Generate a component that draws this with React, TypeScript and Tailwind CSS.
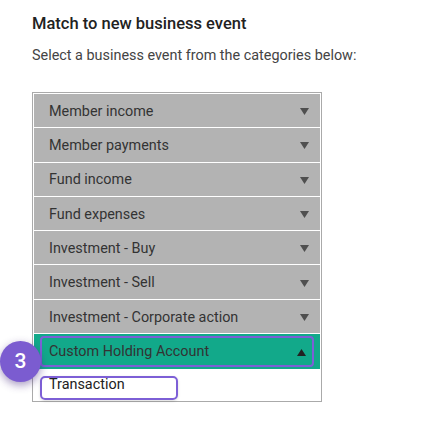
import React from "react";

const rows = [
  "Member income",
  "Member payments",
  "Fund income",
  "Fund expenses",
  "Investment - Buy",
  "Investment - Sell",
  "Investment - Corporate action",
];

function Tri({ up, color }: { up?: boolean; color: string }) {
  return (
    <svg width="9" height="7" viewBox="0 0 9 7">
      {up ? <polygon points="0,7 9,7 4.5,0" fill={color} /> : <polygon points="0,0 9,0 4.5,7" fill={color} />}
    </svg>
  );
}

export default function App() {
  return (
    <div className="w-[424px] h-[432px] bg-white relative overflow-hidden" style={{ fontFamily: "Roboto, 'Noto Sans', sans-serif" }}>
      <div className="pl-[32px] pt-[14px]">
        <div className="text-[16.5px] leading-[20px] font-medium text-[#222]">Match to new business event</div>
        <div className="mt-[12px] text-[14.4px] leading-[20px] text-[#444]">Select a business event from the categories below:</div>
        <div className="mt-[26px] w-[290px] border border-[#aaa] p-px flex flex-col gap-px">
          {rows.map((r) => (
            <div key={r} className="h-[33.3px] bg-[#b3b3b3] flex items-center justify-between pl-[15px] pr-[11px] pt-[2px] text-[14.4px] text-[#333]">
              <span>{r}</span>
              <Tri color="#4f4f4f" />
            </div>
          ))}
          <div className="h-[35px] bg-[#12a98a] px-[6px] py-[2px]">
            <div className="h-full rounded-[4px] border-2 border-[#7d5fd6] flex items-center justify-between pl-[7px] pr-[6px] pt-[1px] text-[14.4px] text-[#333]">
              <span>Custom Holding Account</span>
              <Tri up color="#222" />
            </div>
          </div>
          <div className="h-[30px] px-[6px] pt-[6px]">
            <div className="w-[138px] h-[24px] rounded-[5px] border-2 border-[#7d5fd6] pl-[7px] text-[14.4px] leading-[13px] text-[#222] shadow-[0_1px_3px_rgba(0,0,0,0.15)]">
              Transaction
            </div>
          </div>
        </div>
      </div>
      <div className="absolute left-[0px] top-[341px] w-[41px] h-[41px] rounded-full bg-[#7b5cd0] shadow-[0_3px_8px_rgba(60,30,120,0.45)] flex items-center justify-center text-white text-[21px] font-medium">
        3
      </div>
    </div>
  );
}
